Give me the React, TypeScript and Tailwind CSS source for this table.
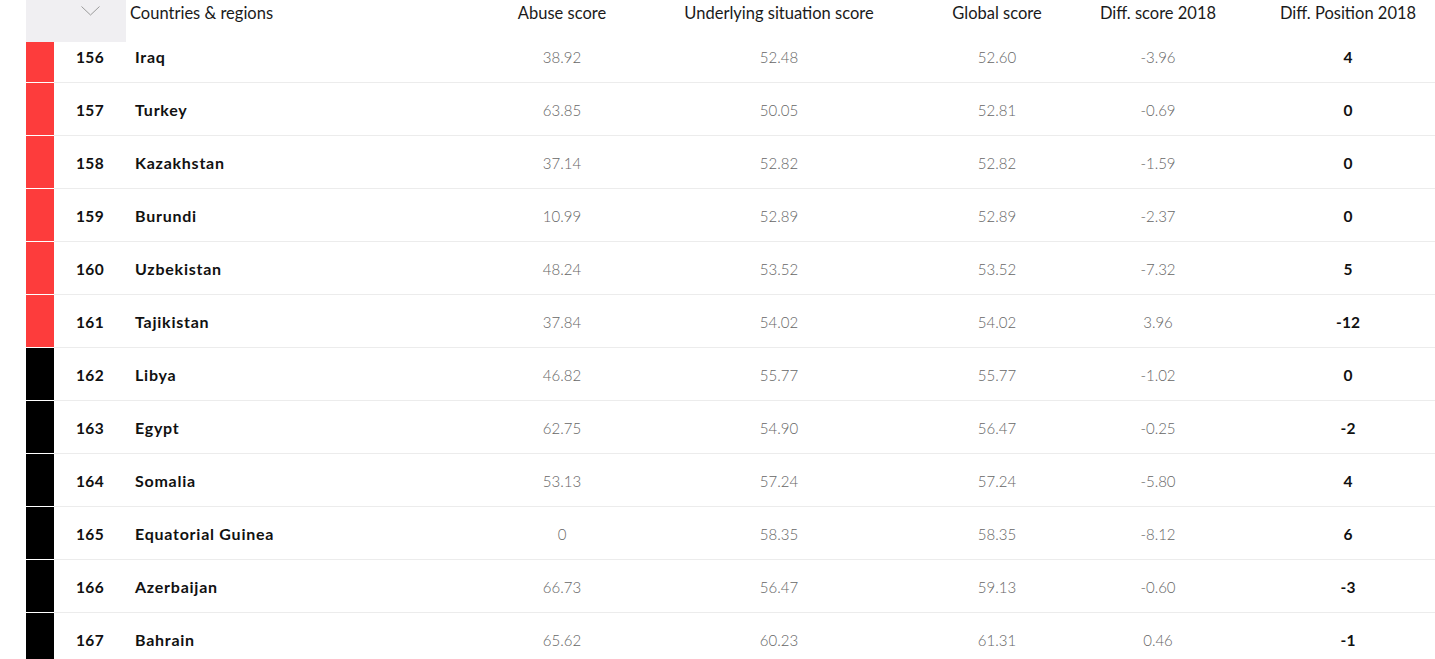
import React from 'react';

type Row = {
  rank: number;
  country: string;
  abuse: string;
  underlying: string;
  global: string;
  diffScore: string;
  diffPos: string;
  level: 'red' | 'black';
};

const rows: Row[] = [
  { rank: 156, country: 'Iraq', abuse: '38.92', underlying: '52.48', global: '52.60', diffScore: '-3.96', diffPos: '4', level: 'red' },
  { rank: 157, country: 'Turkey', abuse: '63.85', underlying: '50.05', global: '52.81', diffScore: '-0.69', diffPos: '0', level: 'red' },
  { rank: 158, country: 'Kazakhstan', abuse: '37.14', underlying: '52.82', global: '52.82', diffScore: '-1.59', diffPos: '0', level: 'red' },
  { rank: 159, country: 'Burundi', abuse: '10.99', underlying: '52.89', global: '52.89', diffScore: '-2.37', diffPos: '0', level: 'red' },
  { rank: 160, country: 'Uzbekistan', abuse: '48.24', underlying: '53.52', global: '53.52', diffScore: '-7.32', diffPos: '5', level: 'red' },
  { rank: 161, country: 'Tajikistan', abuse: '37.84', underlying: '54.02', global: '54.02', diffScore: '3.96', diffPos: '-12', level: 'red' },
  { rank: 162, country: 'Libya', abuse: '46.82', underlying: '55.77', global: '55.77', diffScore: '-1.02', diffPos: '0', level: 'black' },
  { rank: 163, country: 'Egypt', abuse: '62.75', underlying: '54.90', global: '56.47', diffScore: '-0.25', diffPos: '-2', level: 'black' },
  { rank: 164, country: 'Somalia', abuse: '53.13', underlying: '57.24', global: '57.24', diffScore: '-5.80', diffPos: '4', level: 'black' },
  { rank: 165, country: 'Equatorial Guinea', abuse: '0', underlying: '58.35', global: '58.35', diffScore: '-8.12', diffPos: '6', level: 'black' },
  { rank: 166, country: 'Azerbaijan', abuse: '66.73', underlying: '56.47', global: '59.13', diffScore: '-0.60', diffPos: '-3', level: 'black' },
  { rank: 167, country: 'Bahrain', abuse: '65.62', underlying: '60.23', global: '61.31', diffScore: '0.46', diffPos: '-1', level: 'black' },
];

function TableRow({ row, clipped }: { row: Row; clipped?: boolean }) {
  const height = clipped ? 'h-[41px] pt-[2px] items-start' : 'h-[53px] pt-[2px] items-center';
  return (
    <div className="flex">
      <div
        className={
          row.level === 'red'
            ? 'w-[28px] shrink-0 border-b border-white bg-[#fd3c3c]'
            : 'w-[28px] shrink-0 border-b border-white bg-black'
        }
      />
      <div className={`flex flex-1 border-b border-[#ececec] ${height}`}>
        <div className="w-[72px] shrink-0 text-center text-[15.5px] font-bold leading-[26px] tracking-wide text-[#111]">
          {row.rank}
        </div>
        <div className="w-[346px] shrink-0 pl-[9px] text-[16px] font-bold leading-[26px] tracking-[0.75px] text-[#111]">
          {row.country}
        </div>
        <div className="w-[180px] shrink-0 text-center text-[15px] font-light leading-[26px] text-[#666]">
          {row.abuse}
        </div>
        <div className="w-[254px] shrink-0 text-center text-[15px] font-light leading-[26px] text-[#666]">
          {row.underlying}
        </div>
        <div className="w-[182px] shrink-0 text-center text-[15px] font-light leading-[26px] text-[#666]">
          {row.global}
        </div>
        <div className="w-[140px] shrink-0 text-center text-[15px] font-light leading-[26px] text-[#666]">
          {row.diffScore}
        </div>
        <div className="flex-1 pl-[33px] text-center text-[15.5px] font-bold leading-[26px] text-[#111]">
          {row.diffPos}
        </div>
      </div>
    </div>
  );
}

export default function App() {
  return (
    <div
      className="h-[659px] w-[1435px] overflow-hidden bg-white pl-[26px]"
      style={{ fontFamily: 'Lato, "Open Sans", sans-serif' }}
    >
      <div className="flex h-[42px] text-[16.5px] leading-[26px] text-[#1a1a1a]">
        <div className="flex w-[100px] shrink-0 bg-[#f0eff2]">
          <div className="w-[28px] shrink-0" />
          <div className="flex w-[72px] justify-center pt-[6px]">
            <svg width="19" height="10" viewBox="0 0 19 10" fill="none">
              <polyline points="0.5,0.5 9.5,9 18.5,0.5" stroke="#9a9a9a" strokeWidth="1" />
            </svg>
          </div>
        </div>
        <div className="w-[346px] shrink-0 pl-[4px]">Countries &amp; regions</div>
        <div className="w-[180px] shrink-0 text-center">Abuse score</div>
        <div className="w-[254px] shrink-0 text-center">Underlying situation score</div>
        <div className="w-[182px] shrink-0 text-center">Global score</div>
        <div className="w-[140px] shrink-0 text-center">Diff. score 2018</div>
        <div className="flex-1 pl-[33px] text-center">Diff. Position 2018</div>
      </div>
      {rows.map((row, i) => (
        <TableRow key={row.rank} row={row} clipped={i === 0} />
      ))}
    </div>
  );
}
